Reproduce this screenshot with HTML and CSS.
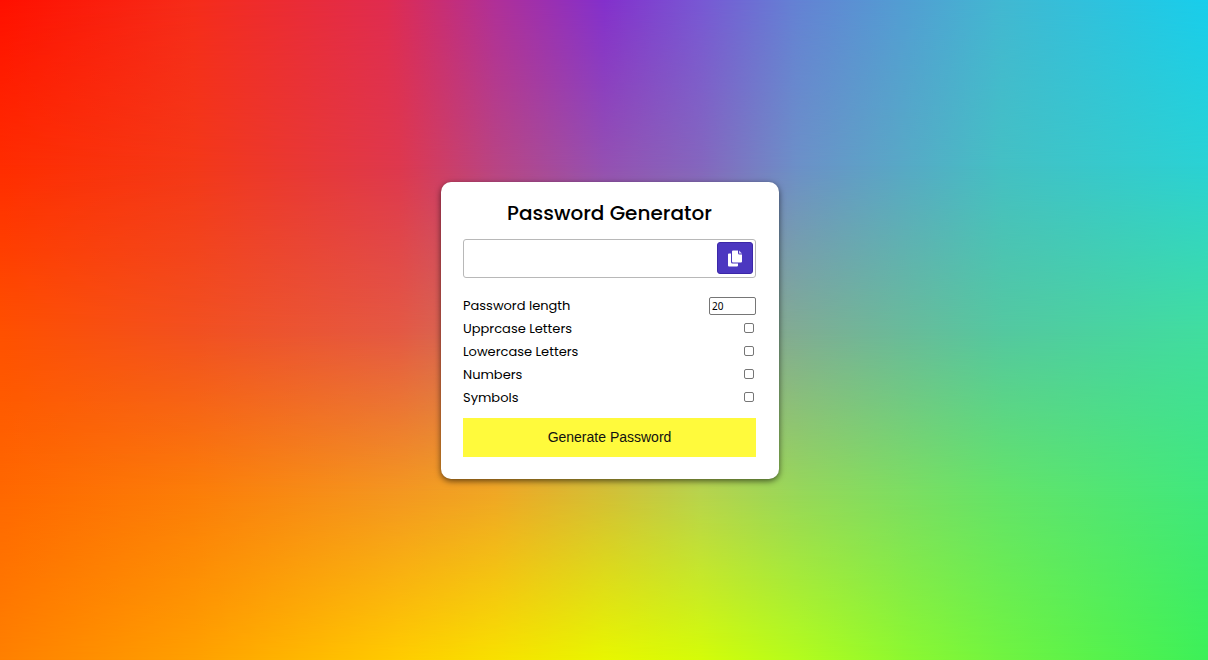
FILE: index.html
```
<!DOCTYPE html>
<html lang="en">
<head>
<meta charset="utf-8">
<meta name="viewport" content="width=device-width, initial-scale=1">
<title>Password Generator</title>
<link rel="stylesheet" href="styles.css">
</head>
<body>
<div class="backdrop" aria-hidden="true">
  <div class="band band-1"></div>
  <div class="band band-2"></div>
  <div class="band band-3"></div>
  <div class="band band-4"></div>
  <div class="band band-5"></div>
</div>
<main class="page">
  <form class="card">
    <h1 class="title">Password Generator</h1>
    <div class="result">
      <input class="result-text" type="text" aria-label="Generated password" readonly>
      <button class="copy" type="button" aria-label="Copy password">
        <svg class="copy-icon" viewBox="0 0 16 17" aria-hidden="true">
          <path fill="#fff" d="M2 3.500H4V12q0 1.500 1.500 1.500H11V15.500q0 1-1 1H2q-1 0-1-1V4.500q0-1 1-1z"/>
          <path fill="#fff" d="M6 .5h5V3q0 1.500 1.500 1.500H15V11.500q0 1-1 1H6q-1 0-1-1v-10q0-1 1-1z"/>
          <path fill="#d9d3f6" d="M12 .5l3 3h-3z"/>
        </svg>
      </button>
    </div>
    <div class="settings">
      <div class="setting">
        <label for="length">Password length</label>
        <input class="number" id="length" type="number" min="4" max="20" value="20">
      </div>
      <div class="setting">
        <label for="uppercase">Upprcase Letters</label>
        <input class="check" id="uppercase" type="checkbox">
      </div>
      <div class="setting">
        <label for="lowercase">Lowercase Letters</label>
        <input class="check" id="lowercase" type="checkbox">
      </div>
      <div class="setting">
        <label for="numbers">Numbers</label>
        <input class="check" id="numbers" type="checkbox">
      </div>
      <div class="setting">
        <label for="symbols">Symbols</label>
        <input class="check" id="symbols" type="checkbox">
      </div>
    </div>
    <button class="generate" type="button">Generate Password</button>
  </form>
</main>
</body>
</html>
```
FILE: styles.css
```
* { box-sizing: border-box; }

body {
  margin: 0;
  display: grid;
  min-height: 100vh;
  font-family: Poppins, Inter, sans-serif;
  color: #000;
}

.backdrop,
.page { grid-area: 1 / 1; }

/* Each band fades in over the one before it, giving a mesh of colour. */
.backdrop { display: grid; }
.band { grid-area: 1 / 1; }
.band-1 {
  background: linear-gradient(90deg, #ff1000 0%, #f62c1a 16%, #e02c50 32%, #b03098 41%, #8430cc 50%, #7858d4 58%, #6482d4 66%, #42b8d2 83%, #18ceec 100%);
}
.band-2 {
  background: linear-gradient(90deg, #ff2c00 0%, #f43818 16%, #de384e 33%, #b84484 41%, #9450b2 50%, #8466be 58%, #6c90c8 66%, #44c0c4 83%, #2ad2d4 100%);
  mask-image: linear-gradient(transparent 0%, #000 25%);
}
.band-3 {
  background: linear-gradient(90deg, #ff5000 0%, #f25020 16%, #e45844 33%, #cc7060 41%, #a88880 50%, #94a088 58%, #80ac94 66%, #54c8a0 83%, #40dea0 100%);
  mask-image: linear-gradient(transparent 25%, #000 50%);
}
.band-4 {
  background: linear-gradient(90deg, #ff6800 0%, #fc7e08 16%, #f49820 33%, #f0a824 41%, #d4c034 50%, #b8d44c 58%, #98d858 66%, #64e468 83%, #40e87c 100%);
  mask-image: linear-gradient(transparent 50%, #000 75%);
}
.band-5 {
  background: linear-gradient(90deg, #ff8000 0%, #ffa000 16%, #ffcc00 33%, #f8e000 41%, #e8f600 50%, #d4fc08 58%, #b4fc1c 66%, #8cf830 75%, #70f440 83%, #3cf058 100%);
  mask-image: linear-gradient(transparent 75%, #000 100%);
}

.page {
  z-index: 1;
  display: flex;
  align-items: center;
  justify-content: center;
  padding: 16px 0 16px 12px;
}

.card {
  width: 338px;
  max-width: 100%;
  padding: 16px 23px 22px 22px;
  background: #fff;
  border-radius: 10px;
  box-shadow: 0 2px 6px rgba(0, 0, 0, 0.6);
}

.title {
  margin: 0 0 11px;
  font-size: 20px;
  line-height: 30px;
  font-weight: 500;
  text-align: center;
}

.result {
  display: flex;
  align-items: center;
  padding: 2px;
  border: 1px solid #b8b8b8;
  border-radius: 3px;
}
.result-text {
  flex: 1;
  min-width: 0;
  height: 33px;
  padding: 0 8px;
  border: 0;
  background: none;
  font-size: 16px;
}
.copy {
  display: grid;
  place-items: center;
  width: 36px;
  height: 32px;
  padding: 0;
  border: 1px solid #3b27a8;
  border-radius: 3px;
  background: #4b37c0;
}
.copy-icon { width: 16px; height: 17px; }

.settings { margin: 17px 0 8px; }
.setting {
  display: flex;
  align-items: center;
  justify-content: space-between;
  height: 23px;
  font-size: 13px;
}
.number {
  width: 47px;
  height: 18px;
  padding: 0 2px;
  border: 1px solid #767676;
  border-radius: 2px;
  background: #fff;
  font: 10px "Noto Sans", sans-serif;
}
.check {
  appearance: none;
  width: 10px;
  height: 10px;
  margin: 0 2px 2px 0;
  border: 1px solid #767676;
  border-radius: 2px;
  background: #fff;
}
.check:checked { background: #4b37c0; }

.generate {
  display: block;
  width: 100%;
  height: 39px;
  padding: 0;
  border: 0;
  background: #fffa3c;
  color: #111;
  font: 14px "Liberation Sans", Arial, sans-serif;
}
```
